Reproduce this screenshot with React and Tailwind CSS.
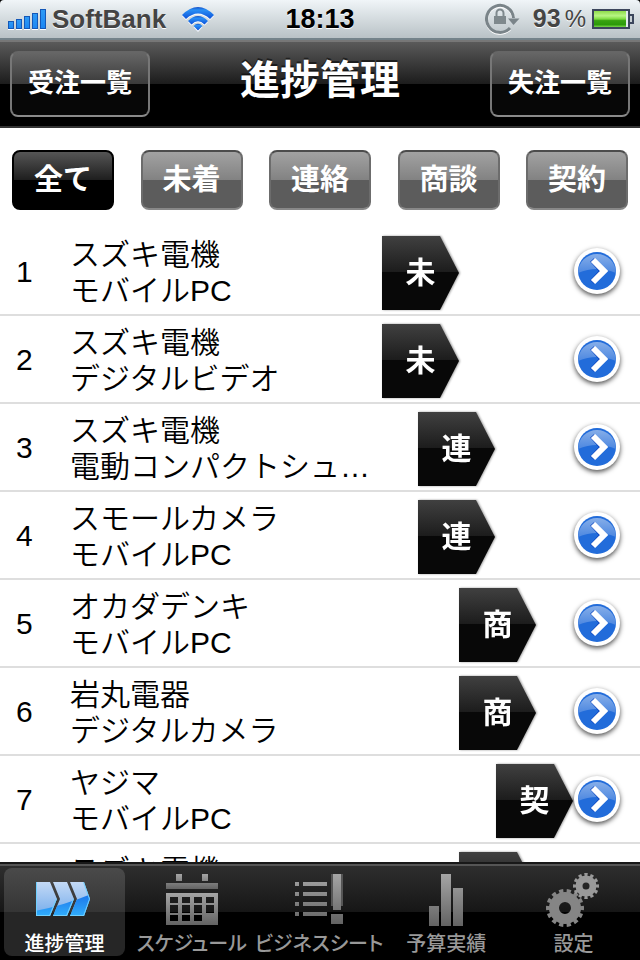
import { useState } from "react";

const filters = ["全て", "未着", "連絡", "商談", "契約"];

const rows = [
  { id: 1, company: "スズキ電機", product: "モバイルPC", stage: "未" },
  { id: 2, company: "スズキ電機", product: "デジタルビデオ", stage: "未" },
  { id: 3, company: "スズキ電機", product: "電動コンパクトシュ…", stage: "連" },
  { id: 4, company: "スモールカメラ", product: "モバイルPC", stage: "連" },
  { id: 5, company: "オカダデンキ", product: "モバイルPC", stage: "商" },
  { id: 6, company: "岩丸電器", product: "デジタルカメラ", stage: "商" },
  { id: 7, company: "ヤジマ", product: "モバイルPC", stage: "契" },
  { id: 8, company: "スズキ電機", product: "モバイルPC", stage: "商" },
];

// how far the tag has moved along the row
const stageOffset = {
  未: "ml-0",
  連: "ml-[36px]",
  商: "ml-[77px]",
  契: "ml-[114px]",
};

function StatusBar() {
  return (
    <div className="relative flex h-10 shrink-0 items-center justify-between rounded-t-sm border-b-2 border-[#74838a] bg-linear-to-b from-[#f0f5f8] to-[#b9c2c6] px-2">
      <div className="flex items-center">
        <svg width="38" height="21" viewBox="0 0 38 21">
          <defs>
            <linearGradient id="bar" x1="0" y1="0" x2="0" y2="1">
              <stop offset="0" stopColor="#2f9bf5" />
              <stop offset="1" stopColor="#1b86f3" />
            </linearGradient>
          </defs>
          <g fill="url(#bar)" stroke="#1458b8" strokeWidth="1">
            <rect x="0.5" y="12.5" width="5" height="7" />
            <rect x="8.5" y="10.5" width="5" height="9" />
            <rect x="16.5" y="7.5" width="5" height="12" />
            <rect x="24.5" y="4.5" width="5" height="15" />
            <rect x="32.5" y="0.5" width="5" height="19" />
          </g>
          <path d="M0 20.5h6M8 20.5h6M16 20.5h6M24 20.5h6M32 20.5h6" stroke="#fff" />
        </svg>
        <span className="ml-[6px] text-[26px] leading-8 font-bold text-[#444] [text-shadow:0_1px_0_#fff]">
          SoftBank
        </span>
        <svg className="ml-4" width="32" height="25" viewBox="0 0 32 25">
          <defs>
            <linearGradient id="wifi" x1="0" y1="0" x2="0" y2="1">
              <stop offset="0" stopColor="#1450c8" />
              <stop offset="0.25" stopColor="#2a90f5" />
              <stop offset="1" stopColor="#0d50d8" />
            </linearGradient>
          </defs>
          <g fill="#fff" transform="translate(0 1)">
            <path d="M0 8Q16 -8 32 8L28 12Q16 1 4 12Z" />
            <path d="M6 14Q16 4 26 14L22.500 17.500Q16 11 9.500 17.500Z" />
            <path d="M11.500 19Q16 14.500 20.500 19L16 24Z" />
          </g>
          <g fill="url(#wifi)">
            <path d="M0 8Q16 -8 32 8L28 12Q16 1 4 12Z" />
            <path d="M6 14Q16 4 26 14L22.500 17.500Q16 11 9.500 17.500Z" />
            <path d="M11.500 19Q16 14.500 20.500 19L16 23.500Z" />
          </g>
        </svg>
      </div>

      <div className="absolute inset-x-0 text-center text-[27px] leading-8 font-bold text-black [text-shadow:0_1px_0_#fff]">
        18:13
      </div>

      <div className="flex items-center">
        <svg width="36" height="32" viewBox="0 0 36 32">
          <path d="M25 26A13.500 13.500 0 1 1 28.500 15" stroke="#fff" fill="none" strokeWidth="3" />
          <path d="M25 25A13.500 13.500 0 1 1 28.500 15" stroke="#7a8489" fill="none" strokeWidth="3" />
          <path d="M23 15.500H34.500L28.500 22Z" fill="#7a8489" />
          <rect x="9" y="13" width="12" height="8" fill="#7f898d" />
          <path d="M11.500 13V10a3.500 3.500 0 0 1 7 0V13" stroke="#7f898d" strokeWidth="2" fill="none" />
        </svg>
        <span className="ml-3 text-[25px] font-bold text-[#444] [text-shadow:0_1px_0_#fff]">93</span>
        <span className="ml-1 text-2xl text-[#444] [text-shadow:0_1px_0_#fff]">%</span>
        <svg className="-mr-[2px] ml-[6px]" width="42" height="21" viewBox="0 0 42 21">
          <defs>
            <linearGradient id="battery" x1="0" y1="0" x2="0" y2="1">
              <stop offset="0" stopColor="#8fdc4a" />
              <stop offset="0.3" stopColor="#b8f584" />
              <stop offset="0.5" stopColor="#7fdc40" />
              <stop offset="0.6" stopColor="#38a312" />
              <stop offset="0.85" stopColor="#2c9a0a" />
              <stop offset="1" stopColor="#7ad84a" />
            </linearGradient>
          </defs>
          <rect x="1" y="1" width="36" height="18" fill="#e4ebee" stroke="#3c465c" strokeWidth="2" />
          <rect x="2" y="2" width="32" height="16" fill="url(#battery)" />
          <path d="M38 6h3v8h-3" fill="#c8d0d4" stroke="#3c465c" strokeWidth="2" />
        </svg>
      </div>
    </div>
  );
}

function NavButton({ children }) {
  return (
    <button className="h-[66px] w-[140px] rounded-lg border-2 border-t-[#666] border-r-[#777] border-b-[#8a8a8a] border-l-[#777] bg-[linear-gradient(#666_0%,#3a3a3a_50%,#070707_50%,#070707_100%)] pb-[2px] text-[26px] font-bold text-white">
      {children}
    </button>
  );
}

function StageTag({ stage }) {
  return (
    <div className={`mb-1 self-end drop-shadow-[1px_0_1px_#999] ${stageOffset[stage]}`}>
      <div className="flex h-[74px] w-[77px] items-center justify-center bg-[linear-gradient(#404040_0%,#1c1c1c_49%,#080808_49%,#080808_100%)] pb-[2px] text-[30px] font-bold text-white [clip-path:polygon(0_0,58px_0,100%_50%,58px_100%,0_100%)]">
        {stage}
      </div>
    </div>
  );
}

function DetailButton({ label }) {
  return (
    <button aria-label={label} className="relative z-10 size-[46px] rounded-full bg-white shadow-[0_2px_5px_rgba(0,0,0,0.7)]">
      <svg viewBox="0 0 46 46" className="size-[46px]">
        <defs>
          <linearGradient id="gloss" x1="0" y1="0" x2="0" y2="1">
            <stop offset="0" stopColor="#86aee9" />
            <stop offset="1" stopColor="#4c87e0" />
          </linearGradient>
        </defs>
        <circle cx="23" cy="23" r="19" fill="#226cda" />
        <path d="M4 25A19 19 0 1 1 42 25Q23 17 4 25Z" fill="url(#gloss)" />
        <path d="M18 12l10 11-10 11" fill="none" stroke="#1048c0" strokeWidth="5" />
        <path d="M19 12l11 11-11 11" fill="none" stroke="#fff" strokeWidth="6" />
      </svg>
    </button>
  );
}

function ProgressIcon() {
  return (
    <svg width="60" height="40" viewBox="0 0 60 40">
      <defs>
        <linearGradient id="chevTop" x1="0" y1="0" x2="0" y2="1">
          <stop offset="0" stopColor="#c8dcf6" />
          <stop offset="1" stopColor="#6aa6ea" />
        </linearGradient>
        <linearGradient id="chevBottom" x1="0" y1="0" x2="0" y2="1">
          <stop offset="0" stopColor="#1a74ea" />
          <stop offset="1" stopColor="#35b8ff" />
        </linearGradient>
        <clipPath id="chevrons">
          <path d="M1 2H15L22 19 15 36H1Z" />
          <path d="M18 2H32L39 19 32 36H18L25 19Z" />
          <path d="M35 2H49L55 19 49 36H35L42 19Z" />
        </clipPath>
      </defs>
      <g clipPath="url(#chevrons)">
        <rect width="56" height="40" fill="url(#chevTop)" />
        <path d="M0 31Q30 25 56 14V40H0Z" fill="url(#chevBottom)" />
        <path
          d="M1 2V36H15L22 19M18 36H32L39 19M35 36H49L55 19 49 2"
          fill="none"
          stroke="#6fd0ff"
          strokeWidth="2"
        />
      </g>
    </svg>
  );
}

function CalendarIcon() {
  return (
    <svg width="52" height="52" viewBox="0 0 52 52">
      <path fill="url(#gray)" d="M10 0h6v7h-6zM36 0h6v7h-6zM0 9h52v6H0z" />
      <path
        fill="url(#gray)"
        fillRule="evenodd"
        d="M0 19h52v32H0zM4 23v6h8v-6zM16 23v6h8v-6zM28 23v6h8v-6zM40 23v6h8v-6zM4 31v8h8v-8zM16 31v8h8v-8zM28 31v8h8v-8zM40 31v8h8v-8zM4 41v6h8v-6zM16 41v6h8v-6zM28 41v6h8v-6z"
      />
    </svg>
  );
}

function SheetIcon() {
  return (
    <svg width="48" height="52" viewBox="0 0 48 52">
      <path
        fill="url(#gray)"
        d="M0 8h4v4H0zM8 8h24v4H8zM0 18h4v4H0zM8 18h24v4H8zM0 28h4v4H0zM8 28h24v4H8zM0 38h4v4H0zM8 38h24v4H8zM38 0h8v36h-8zM36 40h12v10H36z"
      />
      <path fill="#555" d="M36 0h2v32h-2zM46 0h2v32h-2z" />
    </svg>
  );
}

function ChartIcon() {
  return (
    <svg width="34" height="52" viewBox="0 0 34 52">
      <path fill="url(#gray)" d="M0 32h10v20H0zM12 0h10v52H12zM24 14h10v38H24z" />
    </svg>
  );
}

function GearsIcon() {
  return (
    <svg width="54" height="54" viewBox="0 0 54 54" fill="none">
      <circle cx="19" cy="35" r="11" stroke="#858585" strokeWidth="10" />
      <circle cx="19" cy="35" r="17" stroke="#858585" strokeWidth="4" pathLength="28" strokeDasharray="1.100 0.900" strokeDashoffset="0.550" />
      <circle cx="40" cy="13" r="7" stroke="#999" strokeWidth="7" />
      <circle cx="40" cy="13" r="11" stroke="#999" strokeWidth="4" pathLength="24" strokeDasharray="1.100 0.900" strokeDashoffset="0.550" />
    </svg>
  );
}

const tabs = [
  { label: "進捗管理", Icon: ProgressIcon },
  { label: "スケジュール", Icon: CalendarIcon },
  { label: "ビジネスシート", Icon: SheetIcon },
  { label: "予算実績", Icon: ChartIcon },
  { label: "設定", Icon: GearsIcon },
];

export default function App() {
  const [filter, setFilter] = useState("全て");
  const [tab, setTab] = useState("進捗管理");

  return (
    <div className="flex h-screen flex-col overflow-hidden bg-black font-['Liberation_Sans','Noto_Sans_CJK_JP',sans-serif]">
      {/* shared fill for the tab icons */}
      <svg width="0" height="0" className="absolute">
        <linearGradient id="gray" x1="0" y1="0" x2="0" y2="1">
          <stop offset="0" stopColor="#a5a5a5" />
          <stop offset="1" stopColor="#636363" />
        </linearGradient>
      </svg>

      <StatusBar />

      <header className="flex h-[88px] shrink-0 items-center justify-between border-t-2 border-b-2 border-t-[#777] border-b-[#333] bg-[linear-gradient(#5a5a5a_0%,#1c1c1c_50%,#000_50%,#000_100%)] px-[10px]">
        <NavButton>受注一覧</NavButton>
        <h1 className="pb-2 text-[40px] leading-none font-bold text-white [text-shadow:0_-2px_0_rgba(0,0,0,0.5)]">
          進捗管理
        </h1>
        <NavButton>失注一覧</NavButton>
      </header>

      <main className="min-h-0 flex-1 overflow-y-auto bg-white [scrollbar-width:none]">
        <div className="flex justify-between px-3 pt-[22px] pb-[18px]">
          {filters.map((name) => (
            <button
              key={name}
              onClick={() => setFilter(name)}
              className={`h-[60px] w-[102px] rounded-lg border-2 text-[29px] leading-none font-bold text-white ${
                filter === name
                  ? "border-black bg-[linear-gradient(#555_0%,#1e1e1e_50%,#000_50%,#000_100%)]"
                  : "border-t-[#4c4c4c] border-r-[#6c6c6c] border-b-[#888] border-l-[#6c6c6c] bg-[linear-gradient(#a2a2a2_0%,#828282_50%,#5c5c5c_50%,#5c5c5c_100%)]"
              }`}
            >
              {name}
            </button>
          ))}
        </div>

        <ul>
          {rows.map((row) => (
            <li key={row.id} className="flex h-[88px] items-center border-b-2 border-[#dedede] pr-5 pl-4 text-black">
              <span className="w-[54px] shrink-0 pt-[2px] text-3xl">{row.id}</span>
              <div className="w-[312px] shrink-0 pt-1 text-[30px] leading-9 font-[350] whitespace-nowrap">
                <p>{row.company}</p>
                <p>{row.product}</p>
              </div>
              <div className="flex flex-1 self-stretch">
                <StageTag stage={row.stage} />
              </div>
              <DetailButton label={row.company} />
            </li>
          ))}
        </ul>
      </main>

      <nav className="grid h-[98px] shrink-0 grid-cols-5 border-t-2 border-[#181818] bg-[linear-gradient(#555_0px,#555_2px,#2e2e2e_2px,#161616_48px,#000_48px,#000_100%)] px-[2px] pt-1 pb-1">
        {tabs.map(({ label, Icon }) => (
          <button
            key={label}
            onClick={() => setTab(label)}
            className={`mr-1 ml-[2px] flex flex-col items-center rounded-lg text-xl leading-6 font-medium whitespace-nowrap [font-feature-settings:'palt'] ${
              tab === label
                ? "bg-[linear-gradient(#4a4a4a_0%,#353535_50%,#262626_50%,#262626_100%)] text-white"
                : "text-[#999]"
            }`}
          >
            <span className="flex h-16 items-center justify-center">
              <Icon />
            </span>
            {label}
          </button>
        ))}
      </nav>
    </div>
  );
}
